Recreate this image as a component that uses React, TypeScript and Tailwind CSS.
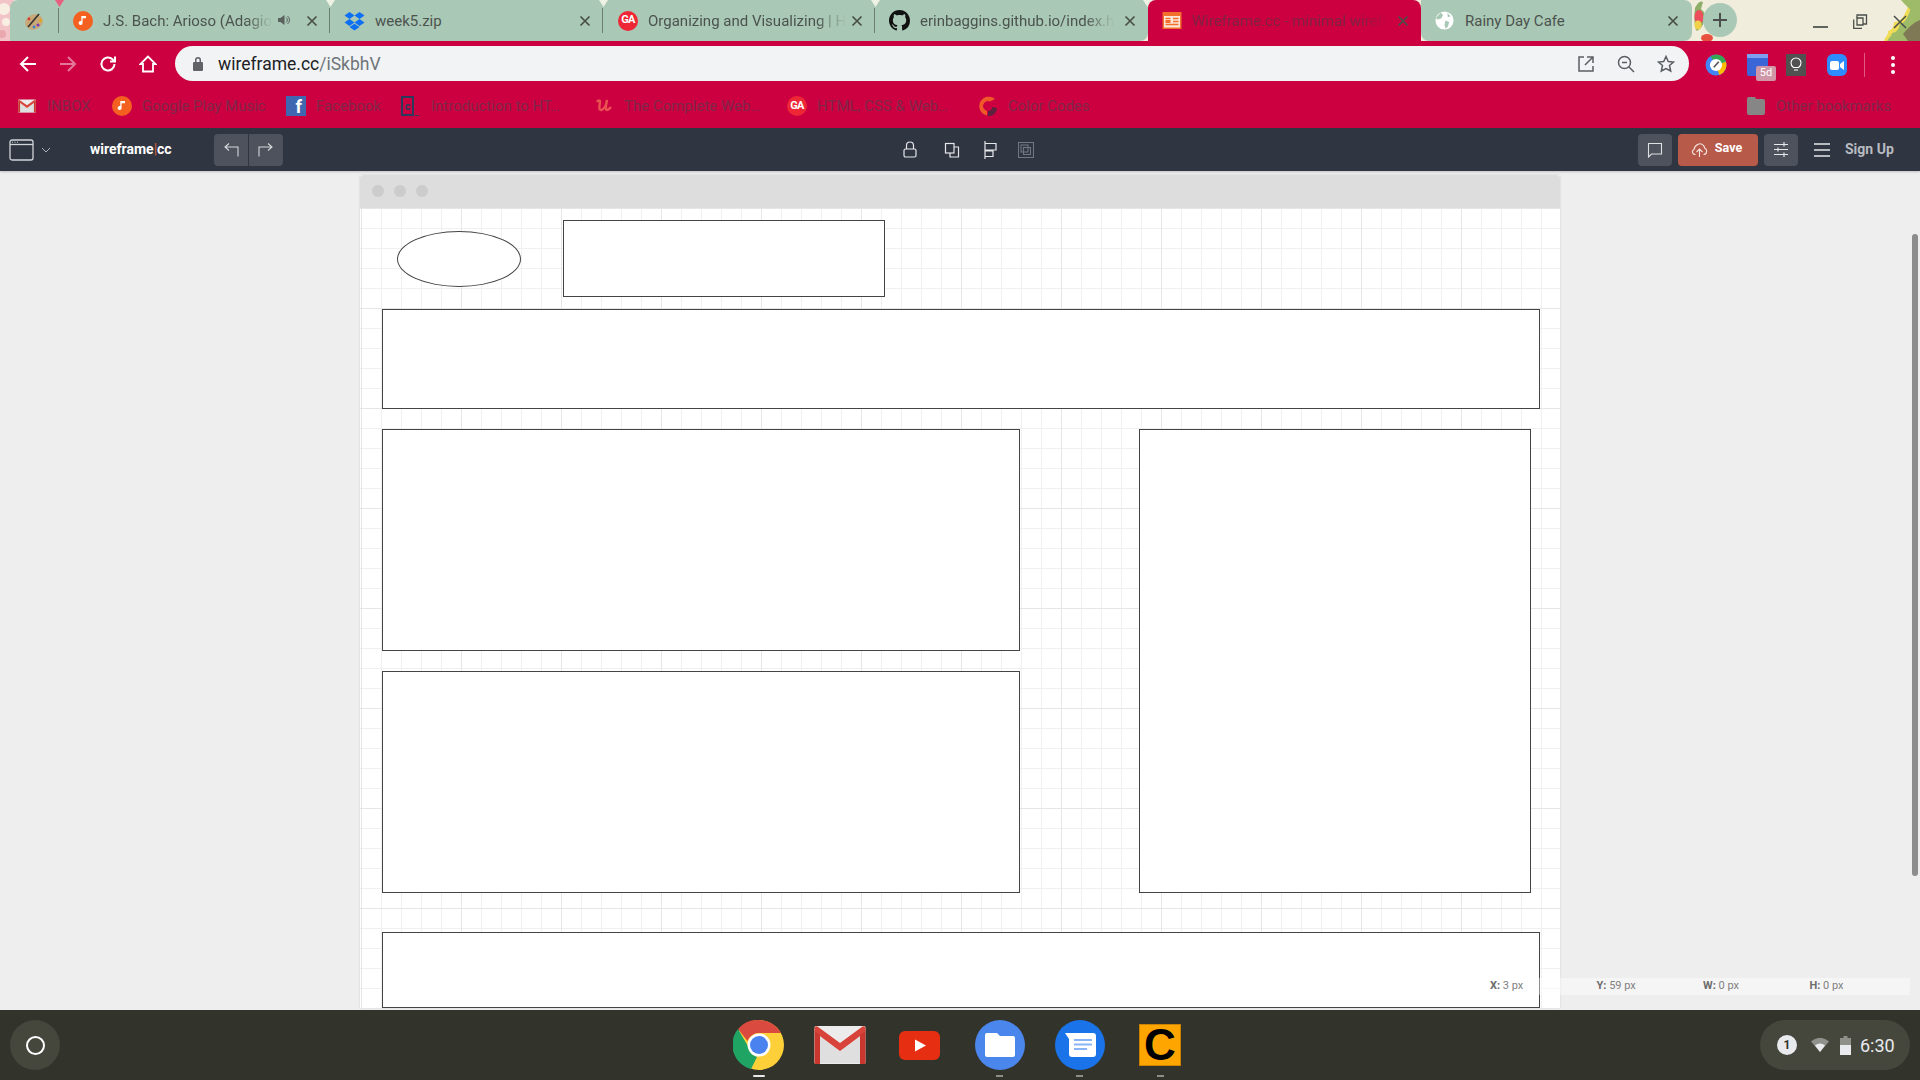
import React from "react";

const S = ({ w = 16, h = 16, vb = "0 0 16 16", c = "#fff", sw = 1.3, className = "", children }: any) => (
  <svg width={w} height={h} viewBox={vb} fill="none" stroke={c} strokeWidth={sw} className={`shrink-0 ${className}`}>
    {children}
  </svg>
);

const Close = () => (
  <svg width="12" height="12" viewBox="0 0 12 12" stroke="#4a5048" strokeWidth="1.7" className="shrink-0">
    <path d="M1.5 1.5l9 9M10.5 1.5l-9 9" />
  </svg>
);

const Music = ({ size = 20 }: { size?: number }) => (
  <svg width={size} height={size} viewBox="0 0 20 20" className="shrink-0">
    <circle cx="10" cy="10" r="10" fill="#f4601f" />
    <path d="M9.6 5v7a2 2 0 1 1-1.3-1.9V5z M9.6 5h3.4v2.2H9.6z" fill="#fff" />
  </svg>
);

const GA = () => (
  <span className="flex h-5 w-5 shrink-0 items-center justify-center rounded-full bg-[#ee2737] text-[11px] font-bold tracking-[-0.8px] text-white">GA</span>
);

const Tab = ({ w, icon, title, close = true, active = false, extra, textW, round }: any) => (
  <div className={`relative flex h-full items-center ${w} ${active ? "bg-[#cc0040]" : ""} ${round ?? ""}`}>
    {icon}
    {title && (
      <span className={`${textW} pt-[1px] whitespace-nowrap text-[15px] [mask-image:linear-gradient(90deg,#000_85%,transparent)] ${active ? "text-[#7d2340]" : "text-[#4c534f]"}`}>
        {title}
      </span>
    )}
    {extra}
    {close && <span className="absolute right-[12px] top-[15px]"><Close /></span>}
  </div>
);

const Chrome = () => (
  <svg width="52" height="52" viewBox="0 0 52 52">
    <circle cx="26" cy="26" r="25" fill="#fdd03a" />
    <path d="M26 1a25 25 0 0 1 22 13H26a12 12 0 0 0-11.5 8L5 10A25 25 0 0 1 26 1z" fill="#db4a3f" />
    <path d="M5 10l11 19a12 12 0 0 0 8 9l-6 12A25 25 0 0 1 5 10z" fill="#1fa463" />
    <circle cx="26" cy="26" r="11.5" fill="#fff" />
    <circle cx="26" cy="26" r="9" fill="#4a83f0" />
  </svg>
);

const Gmail = ({ w = 52, h = 40 }: { w?: number; h?: number }) => (
  <svg width={w} height={h} viewBox="0 0 52 40">
    <rect x="0.5" y="1" width="51" height="38" rx="1.5" fill="#ececec" />
    <path d="M0.5 38V4l25 19 25-19v34" fill="#dfdfdf" />
    <path d="M0.5 3a2 2 0 0 1 3-1.4L26 18 48.5 1.6A2 2 0 0 1 51.5 3v4L26 26 0.5 7z" fill="#d9443a" />
    <path d="M0.5 6L6 10v29H2a1.5 1.5 0 0 1-1.5-1.5zM51.5 6L46 10v29h4a1.5 1.5 0 0 0 1.5-1.5z" fill="#c9372f" />
  </svg>
);

const Bm = ({ icon, label, w }: any) => (
  <div className={`flex shrink-0 items-center ${w}`}>
    <div className="flex w-[20px] shrink-0 items-center justify-center">{icon}</div>
    <span className="ml-[10px] whitespace-nowrap text-[15px] text-[#81274a]">{label}</span>
  </div>
);

const Btn = ({ className, children }: any) => (
  <div className={`flex h-[32px] items-center justify-center rounded-[4px] ${className}`}>{children}</div>
);

const Shape = ({ className }: { className: string }) => (
  <div className={`absolute border border-[#444444] bg-white ${className}`} />
);

const Stat = ({ k, v }: { k: string; v: string }) => (
  <div className="w-[106.5px] shrink-0 whitespace-nowrap text-[11px] text-[#808080]">
    <b className="text-[#6c6c6c]">{k}</b> {v}
  </div>
);

export default function App() {
  return (
    <div className="relative flex h-[1080px] w-[1920px] flex-col overflow-hidden bg-white [font-family:Roboto,sans-serif]">
      {/* Tab strip */}
      <div className="relative flex h-[41px] shrink-0 bg-[#f0eddc]">
        <svg className="absolute left-0 top-0" width="14" height="41" viewBox="0 0 14 41">
          <rect width="14" height="41" fill="#f2c4c8" />
          <circle cx="4" cy="9" r="6" fill="#f8efe2" />
          <circle cx="6" cy="22" r="4" fill="#f8efe2" />
          <circle cx="2" cy="34" r="4" fill="#e9a8ae" />
        </svg>
        <div className="relative ml-[10px] flex h-full w-[1138px] rounded-br-[8px] rounded-tl-[8px] bg-[#a9c8b5]">
          <div className="flex h-full w-[49px] items-center pl-[14px]">
            <svg width="20" height="20" viewBox="0 0 20 20">
              <ellipse cx="10" cy="11" rx="9" ry="7.5" fill="#c9a877" transform="rotate(-20 10 11)" />
              <path d="M4 16L15 3" stroke="#333" strokeWidth="1.6" />
              <circle cx="14" cy="14" r="1.6" fill="#7d3fb0" />
              <circle cx="16.5" cy="9.5" r="1.4" fill="#e3a51a" />
              <circle cx="5" cy="8" r="1.4" fill="#d23a3a" />
              <circle cx="10" cy="16" r="1.4" fill="#3a7fd2" />
            </svg>
          </div>
          <Tab w="w-[271px] pl-[14px]" textW="ml-[10px]" title="J.S. Bach: Arioso (Adagio" icon={<Music />}
            extra={
              <svg width="14" height="14" viewBox="0 0 14 14" fill="#5b625e" className="absolute left-[218px] top-[13px]">
                <path d="M1 5h2.5L7.5 2v10L3.500 9H1z" />
                <path d="M9 4.500a3 3 0 0 1 0 5M10.500 3a5 5 0 0 1 0 8" stroke="#5b625e" fill="none" />
              </svg>
            } />
          <Tab w="w-[273px] pl-[14px]" textW="ml-[10px] [mask-image:none]" title="week5.zip" icon={
            <svg width="21" height="20" viewBox="0 0 21 20" fill="#0d6ff2" className="shrink-0">
              <path d="M5.500 1L0.500 4.500l5 3.500 5-3.500zM15.500 1l-5 3.500 5 3.500 5-3.500zM0.500 11.500l5 3.500 5-3.500-5-3.500zM20.500 11.500l-5-3.500-5 3.500 5 3.500zM5.500 16l5 3.500 5-3.500-5-3.300z" />
            </svg>
          } />
          <Tab w="w-[272px] pl-[15px]" textW="ml-[10px]" title="Organizing and Visualizing | H" icon={<GA />} />
          <Tab w="w-[273px] pl-[14px]" textW="ml-[10px]" title="erinbaggins.github.io/index.h" icon={
            <svg width="21" height="21" viewBox="0 0 16 16" fill="#111" className="shrink-0">
              <path d="M8 0C3.580 0 0 3.580 0 8c0 3.540 2.290 6.530 5.470 7.590.4.070.55-.170.550-.380 0-.190-.010-.820-.010-1.490-2.010.370-2.530-.490-2.690-.940-.090-.230-.480-.940-.820-1.130-.280-.150-.680-.520-.010-.530.630-.010 1.080.580 1.230.820.720 1.210 1.870.870 2.330.660.070-.520.280-.870.510-1.070-1.780-.200-3.640-.890-3.640-3.950 0-.870.310-1.590.820-2.150-.080-.200-.360-1.020.080-2.120 0 0 .670-.210 2.200.820.640-.180 1.320-.270 2-.270s1.360.090 2 .270c1.530-1.040 2.200-.820 2.200-.820.440 1.100.160 1.920.080 2.120.510.560.820 1.270.820 2.150 0 3.070-1.870 3.750-3.650 3.950.290.250.540.730.540 1.480 0 1.070-.010 1.930-.010 2.200 0 .210.150.460.550.380A8.010 8.010 0 0 0 16 8c0-4.420-3.580-8-8-8z" />
            </svg>
          } />
          {[48, 319, 592, 864].map((x) => (
            <div key={x} className="absolute top-[8px] h-[25px] w-[1px] bg-[#6e7d74]" style={{ left: x }} />
          ))}
          {[49, 320, 593, 865, 1137].map((x) => (
            <svg key={x} className="absolute top-0" style={{ left: x - 4 }} width="9" height="7" viewBox="0 0 9 7"><path d="M0 0h9L4.500 7z" fill={x === 49 ? "#e8607f" : "#eef2e4"} /></svg>
          ))}
        </div>
        <Tab w="w-[273px] pl-[14px]" active round="rounded-t-[8px]" textW="ml-[10px]" title="Wireframe.cc - minimal wirefr" icon={
          <svg width="20" height="20" viewBox="0 0 20 20" className="shrink-0">
            <rect x="0.500" y="1" width="19" height="17" fill="#f26f2c" />
            <rect x="2" y="5" width="16" height="11.500" fill="#fde7d8" />
            <path d="M3.500 7.500h5M11 7.500h5.500M11 10.500h5.500M3.500 13.500h13" stroke="#f26f2c" strokeWidth="1.500" />
            <rect x="3.500" y="9" width="5" height="3" fill="#f26f2c" />
          </svg>
        } />
        <div className="relative flex h-full w-[271px] items-center rounded-b-[8px] rounded-tr-[8px] bg-[#a9c8b5] pl-[14px]">
          <svg width="19" height="19" viewBox="0 0 20 20" className="shrink-0">
            <circle cx="10" cy="10" r="9.500" fill="#fff" />
            <path d="M6 1.500l2.500 3-2 3.500-4 1L1 7zM11 10l4 1.500-1.500 5-2.500 2-1-4zM13 2l3.500 3.500-3 1z" fill="#a9c8b5" />
          </svg>
          <span className="ml-[11px] whitespace-nowrap pt-[1px] text-[15px] text-[#4c534f]">Rainy Day Cafe</span>
          <span className="absolute right-[13px] top-[15px]"><Close /></span>
        </div>
        <div className="relative flex-1">
          <svg className="absolute left-0 top-0" width="228" height="41" viewBox="0 0 228 41">
            <path d="M3 8c2-4 5-8 8-6l-2 7 3 3c2 5 0 12-3 16l-4 3c-3-2-3-16-2-23z" fill="#8fae6a" />
            <ellipse cx="7" cy="17" rx="4.500" ry="7" fill="#ea4f5b" />
            <ellipse cx="6" cy="25" rx="3.500" ry="4.500" fill="#f0d24a" />
            <ellipse cx="15" cy="38" rx="6" ry="4" fill="#e8503f" />
            <path d="M218 0h10v41h-36c1-5 5-6 4-10 5-1 6-6 6-9 8 0 12-8 16-22z" fill="#f1dc55" />
            <path d="M221 0h7v41h-33c2-4 5-5 5-8 7-1 7-7 8-9 6-1 10-11 13-24z" fill="#9dbb68" />
            <path d="M228 20c-6 2-12 8-17 14l5 7h12z" fill="#7f7a55" />
            <path d="M209 0c3 3 6 7 10 10l4-10z" fill="#9dbb68" />
          </svg>
          <div className="absolute left-[11px] top-[3px] flex h-[34px] w-[34px] items-center justify-center rounded-full bg-[#a9c8b5]">
            <svg width="14" height="14" viewBox="0 0 14 14" stroke="#4a4f4b" strokeWidth="2"><path d="M7 0v14M0 7h14" /></svg>
          </div>
          <div className="absolute left-[121px] top-[26px] h-[2px] w-[15px] bg-[#60655e]" />
          <svg className="absolute left-[161px] top-[14px]" width="15" height="15" viewBox="0 0 15 15" fill="none" stroke="#4a4f4b" strokeWidth="1.300">
            <path d="M9 14.500H.7V5.500" />
            <path d="M4 4V1h9.500v9H10" />
            <path d="M4 4v7h6V4z" />
          </svg>
          <svg className="absolute left-[201px] top-[15px]" width="14" height="14" viewBox="0 0 14 14" stroke="#4a4f4b" strokeWidth="1.500"><path d="M1 1l12 12M13 1L1 13" /></svg>
        </div>
      </div>

      {/* Address row */}
      <div className="relative flex h-[46px] shrink-0 items-start bg-[#cc0040]">
        <div className="flex h-full w-[175px] items-start pt-[14px]">
          <S w={18} h={18} vb="0 0 18 18" sw={2} className="ml-[19px]"><path d="M17 9H2M9 2L2 9l7 7" /></S>
          <S w={18} h={18} vb="0 0 18 18" sw={2} c="#e5799b" className="ml-[22px]"><path d="M1 9h15M9 2l7 7-7 7" /></S>
          <S w={18} h={18} vb="0 0 18 18" sw={2} className="ml-[22px]"><path d="M15.500 9a6.500 6.500 0 1 1-2-4.700L16 6.500M16 1.500v5h-5" /></S>
          <S w={18} h={18} vb="0 0 18 18" sw={1.800} className="ml-[22px]"><path d="M9 1.500L1.500 9H4v7.500h10V9h2.500z" /></S>
        </div>
        <div className="mt-[5px] flex h-[35px] w-[1514px] items-center rounded-full bg-[#f1f3f4] pl-[17px]">
          <svg width="12" height="15" viewBox="0 0 12 15" fill="#5f6368"><path d="M3 6V4a3 3 0 0 1 6 0v2h-1.500V4a1.500 1.500 0 0 0-3 0v2z" /><rect x="1" y="6" width="10" height="9" rx="1" /></svg>
          <span className="ml-[14px] pt-[1px] text-[17.5px] text-[#202124]">wireframe.cc<span className="text-[#70757a]">/iSkbhV</span></span>
          <div className="ml-auto flex items-center gap-[22px] pr-[14px]">
            <S w={18} h={18} vb="0 0 18 18" c="#5a5f62" sw={1.500}><path d="M7 2H2v14h14v-5M10 2h6v6M16 2L8 10" /></S>
            <S w={18} h={18} vb="0 0 18 18" c="#5a5f62" sw={1.500}><circle cx="7.500" cy="7.500" r="6" /><path d="M5 7.500h5M12 12l5 5" /></S>
            <S w={18} h={18} vb="0 0 18 18" c="#5a5f62" sw={1.500}><path d="M9 1.500l2.300 5 5.200.5-4 3.500 1.200 5.500L9 13.500 4.300 16l1.200-5.500-4-3.500 5.200-.5z" /></S>
          </div>
        </div>
        <div className="relative flex-1">
          <svg className="absolute left-[16px] top-[13px]" width="22" height="22" viewBox="0 0 20 20">
            <circle cx="10" cy="10" r="9.500" fill="#4285f4" />
            <path d="M10 .5A9.500 9.500 0 0 1 19 7l-9 3-5-8z" fill="#34a853" />
            <path d="M19 7a9.500 9.500 0 0 1-6 12l-3-9z" fill="#fbbc04" />
            <circle cx="10" cy="10" r="5.500" fill="#fff" />
            <path d="M8 12l4.500-5" stroke="#555" strokeWidth="1.500" />
          </svg>
          <div className="absolute left-[58px] top-[13px] h-[22px] w-[21px] rounded-[2px] bg-[#3a66d8]" />
          <div className="absolute left-[58px] top-[13px] h-[4px] w-[21px] bg-[#7fa0ee]" />
          <div className="absolute left-[67px] top-[25px] flex h-[15px] w-[20px] items-center justify-center rounded-[2px] bg-[#cf97a7] text-[11px] text-white">5d</div>
          <div className="absolute left-[97px] top-[13px] flex h-[22px] w-[20px] items-center justify-center bg-[#515151]">
            <svg width="12" height="16" viewBox="0 0 12 16" fill="none" stroke="#fff" strokeWidth="1.100"><path d="M3.500 10.500C2 9.500 1 8 1 6a5 5 0 0 1 10 0c0 2-1 3.500-2.500 4.500zM4 13h4" /></svg>
          </div>
          <div className="absolute left-[138px] top-[13px] flex h-[22px] w-[20px] items-center justify-center rounded-[6px] bg-[#2d8cff]">
            <svg width="14" height="9" viewBox="0 0 14 9" fill="#fff"><rect width="9" height="9" rx="2" /><path d="M10 3l4-3v9l-4-3z" /></svg>
          </div>
          <div className="absolute left-[175px] top-[12px] h-[24px] w-[1px] bg-[#de5a80]" />
          <svg className="absolute left-[202px] top-[14px]" width="4" height="20" viewBox="0 0 4 20" fill="#fff"><circle cx="2" cy="3" r="2" /><circle cx="2" cy="10" r="2" /><circle cx="2" cy="17" r="2" /></svg>
        </div>
      </div>

      {/* Bookmarks */}
      <div className="relative flex h-[41px] shrink-0 items-center bg-[#cc0040] pb-[3px] pl-[17px]">
        <Bm w="w-[95px]" label="INBOX" icon={<Gmail w={18} h={14} />} />
        <Bm w="w-[174px]" label="Google Play Music" icon={<Music />} />
        <Bm w="w-[115px]" label="Facebook" icon={
          <div className="flex h-[20px] w-[20px] items-center justify-end bg-[#3f66b0] pr-[4px] pt-[2px] text-[18px] font-bold leading-[18px] text-white">f</div>
        } />
        <Bm w="w-[193px]" label="Introduction to HT…" icon={
          <div className="flex h-[20px] w-[20px] items-end">
            <div className="flex h-[20px] w-[13px] items-center justify-center border-2 border-[#2b3a5c] text-[11px] font-bold leading-none text-[#2b3a5c]">c</div>
            <div className="ml-[1px] h-[1px] w-[4px] bg-[#2b3a5c]" />
          </div>
        } />
        <Bm w="w-[193px]" label="The Complete Web…" icon={
          <S w={18} h={18} vb="0 0 18 18" c="#ea5252" sw={2.400}><path d="M2 5c1-2 3-2 3 0s-2 8 1 8 6-6 6-10c-1 4-2 10 0 10s3-2 4-3" /></S>
        } />
        <Bm w="w-[191px]" label="HTML, CSS & Web…" icon={<GA />} />
        <Bm w="w-[100px]" label="Color Codes" icon={
          <svg width="20" height="20" viewBox="0 0 20 20" className="shrink-0">
            <path d="M17 3A9.500 9.500 0 1 0 9 19.500V15a5 5 0 1 1 3-9.500z" fill="#f05a28" />
            <path d="M10 20a8 8 0 0 0 9-8l-5-1a4 4 0 0 1-4 4z" fill="#5b2340" />
          </svg>
        } />
        <div className="absolute left-[1747px] top-[12px] h-[16px] w-[18px] rounded-[2px] bg-[#868686]" />
        <div className="absolute left-[1747px] top-[10px] h-[5px] w-[9px] rounded-t-[2px] bg-[#868686]" />
        <span className="absolute left-[1776px] top-[8px] whitespace-nowrap text-[15px] text-[#81274a]">Other bookmarks</span>
      </div>

      {/* Wireframe toolbar */}
      <div className="relative z-10 flex h-[43px] shrink-0 items-center bg-[#2f3541] shadow-[0_1px_2px_rgba(0,0,0,0.2)]">
        <svg className="ml-[9px]" width="25" height="22" viewBox="0 0 25 22" fill="none" stroke="#d2d4d8" strokeWidth="1.300">
          <rect x="1" y="1" width="23" height="20" rx="2" />
          <path d="M1 5.500h23" />
          <path d="M3 3.200h1M5.500 3.200h1M8 3.200h1" strokeWidth="1" />
        </svg>
        <S w={10} h={10} vb="0 0 10 10" c="#aab0b8" sw={1} className="ml-[7px]"><path d="M1 3l4 4 4-4" /></S>
        <span className="ml-[39px] w-[124px] text-[14px] font-bold text-white">wireframe<span className="font-normal text-[#d8613c]">|</span>cc</span>
        <Btn className="w-[69px] bg-[#4d525c]">
          <div className="flex h-full flex-1 items-center justify-center border-r border-[#2f3541] pl-[2px]">
            <S w={16} h={16} vb="0 0 16 16" c="#d6d8db" sw={1.100}><path d="M5 1.500L1 5l4 3.500M1 5h13v9.500" /></S>
          </div>
          <div className="flex h-full flex-1 items-center justify-center pr-[2px]">
            <S w={16} h={16} vb="0 0 16 16" c="#d6d8db" sw={1.100}><path d="M11 1.500L15 5l-4 3.500M15 5H2v9.500" /></S>
          </div>
        </Btn>
        <div className="ml-[619px] flex items-center">
          <S w={16} h={17} vb="0 0 16 17" c="#e6e7e9" sw={1.200}><rect x="2" y="8" width="12" height="8" rx="1.500" /><path d="M4.500 8V4.500a3.500 3.500 0 0 1 7 0V8" /></S>
          <S w={16} h={16} vb="0 0 16 16" c="#e6e7e9" sw={1.200} className="ml-[26px]"><rect x="1.500" y="1.500" width="8.500" height="9.500" /><path d="M10 5h4.500v10H6v-4" /></S>
          <S w={14} h={18} vb="0 0 14 18" c="#e6e7e9" sw={1.200} className="ml-[24px]"><path d="M1 0v18M1 2.500h11V9H1M1 10h8v5.500H1" /></S>
          <S w={16} h={16} vb="0 0 16 16" c="#717680" sw={1.100} className="ml-[20px]"><rect x=".500" y=".500" width="15" height="15" /><rect x="3" y="3" width="7" height="7" /><rect x="5.500" y="5.500" width="7" height="7" /></S>
        </div>
        <Btn className="ml-[604px] w-[34px] bg-[#4d525c]">
          <S w={16} h={16} vb="0 0 16 16" c="#dfe0e3" sw={1.100}><path d="M1.500 1.500h13v10.500H4.500L1.500 15z" /></S>
        </Btn>
        <Btn className="ml-[6px] w-[80px] bg-[#b85a4a]">
          <S w={17} h={16} vb="0 0 17 16" c="#f3e2de" sw={1.100} className="-ml-[3px]"><path d="M4.500 12.500C1 12.500 .500 8.500 3 7.500 3.500 3.500 9-.500 12.500 3.500c1 1 1 2.500 1 2.500 3 1 3 6.500-1 6.500M8.500 15V7.500M5.500 10l3-3 3 3" /></S>
          <span className="mb-[2px] ml-[7px] text-[12.5px] font-bold text-white">Save</span>
        </Btn>
        <Btn className="ml-[6px] w-[34px] bg-[#4d525c]">
          <S w={14} h={15} vb="0 0 14 15" c="#e6e7e9" sw={1.200}><path d="M0 2.500h14M0 7.500h14M0 12.500h14M10 0v4.500M4 5.500v4M10 10.500v4.500" /></S>
        </Btn>
        <S w={16} h={14} vb="0 0 16 14" c="#e6e7e9" sw={1.400} className="ml-[16px]"><path d="M0 1h16M0 7h16M0 13h16" /></S>
        <span className="ml-[15px] whitespace-nowrap text-[14px] font-bold text-[#b8bbc0]">Sign Up</span>
      </div>

      {/* Workspace */}
      <div className="relative flex min-h-0 flex-1 justify-center overflow-hidden bg-[#eeeeee]">
        <div className="mt-[4px] flex h-[833px] w-[1200px] flex-col shadow-[0_0_2px_rgba(0,0,0,0.12)]">
          <div className="flex h-[33px] shrink-0 items-center gap-[10px] rounded-t-[4px] bg-[#dddddd] pb-[1px] pl-[12px]">
            <div className="h-[12px] w-[12px] rounded-full bg-[#cccccc]" />
            <div className="h-[12px] w-[12px] rounded-full bg-[#cccccc]" />
            <div className="h-[12px] w-[12px] rounded-full bg-[#cccccc]" />
          </div>
          <div className="relative flex-1 bg-white bg-[linear-gradient(#e6e6e6_1px,transparent_1px),linear-gradient(90deg,#e6e6e6_1px,transparent_1px),linear-gradient(#f0f0f0_1px,transparent_1px),linear-gradient(90deg,#f0f0f0_1px,transparent_1px)] [background-position:1px_0] [background-size:100px_100px,100px_100px,20px_20px,20px_20px]">
            <Shape className="left-[37px] top-[23px] h-[56px] w-[124px] rounded-[50%]" />
            <Shape className="left-[203px] top-[12px] h-[77px] w-[322px]" />
            <Shape className="left-[22px] top-[101px] h-[100px] w-[1158px]" />
            <Shape className="left-[22px] top-[221px] h-[222px] w-[638px]" />
            <Shape className="left-[22px] top-[463px] h-[222px] w-[638px]" />
            <Shape className="left-[779px] top-[221px] h-[464px] w-[392px]" />
            <Shape className="left-[22px] top-[724px] h-[76px] w-[1158px]" />
          </div>
        </div>
        <div className="absolute left-[1470px] top-[807px] flex h-[17px] w-[440px] items-center overflow-visible bg-white/40 pl-[20px]">
          <Stat k="X:" v="3 px" />
          <Stat k="Y:" v="59 px" />
          <Stat k="W:" v="0 px" />
          <div className="shrink-0 whitespace-nowrap text-[11px] text-[#808080]"><b className="text-[#6c6c6c]">H:</b> 0 px</div>
        </div>
        <div className="absolute left-[1912px] top-[63px] h-[642px] w-[6px] rounded-[3px] bg-[#8c8c8c]" />
      </div>

      {/* Shelf */}
      <div className="relative flex h-[70px] shrink-0 items-center bg-[#32332a] pl-[10px] pr-[10px]">
        <div className="flex h-[50px] w-[50px] items-center justify-center rounded-full bg-[#45473d]">
          <div className="h-[19px] w-[19px] rounded-full border-2 border-white" />
        </div>
        <div className="ml-[673px] flex items-center">
          <Chrome />
          <div className="ml-[29px]"><Gmail /></div>
          <svg className="ml-[33px]" width="41" height="29" viewBox="0 0 41 29">
            <rect width="41" height="29" rx="6" fill="#e62e12" />
            <path d="M16 8.500l11 6-11 6z" fill="#fff" />
          </svg>
          <div className="relative ml-[35px] flex h-[50px] w-[50px] items-center justify-center rounded-full bg-[#4a86ec]">
            <svg width="30" height="24" viewBox="0 0 30 24" fill="#fff"><path d="M2 0h10l3 3h13a2 2 0 0 1 2 2v17a2 2 0 0 1-2 2H2a2 2 0 0 1-2-2V2a2 2 0 0 1 2-2z" /></svg>
          </div>
          <div className="ml-[30px] flex h-[50px] w-[50px] items-center justify-center rounded-full bg-[#1a73e8]">
            <svg width="31" height="24" viewBox="0 0 31 24"><path d="M0 0h28a3 3 0 0 1 3 3v18a3 3 0 0 1-3 3H7a3 3 0 0 1-3-3V6z" fill="#fff" /><path d="M9 7h18M9 11.500h18M9 16h13" stroke="#8ab4f8" strokeWidth="2" /></svg>
          </div>
          <div className="ml-[34px] flex h-[42px] w-[42px] items-center justify-center border border-[#c98300] bg-[#ffa500] text-[44px] font-bold leading-none text-black [font-family:'Liberation_Sans',sans-serif]">C</div>
        </div>
        <div className="absolute left-[753px] top-[65px] h-[2px] w-[12px] rounded-[1px] bg-[#e8e8e8]" />
        <div className="absolute left-[996px] top-[65px] h-[2px] w-[7px] bg-[#8d8e88]" />
        <div className="absolute left-[1076px] top-[65px] h-[2px] w-[7px] bg-[#8d8e88]" />
        <div className="absolute left-[1157px] top-[65px] h-[2px] w-[7px] bg-[#8d8e88]" />
        <div className="ml-auto flex h-[50px] w-[150px] items-center rounded-full bg-[#45473d] pl-[17px]">
          <div className="flex h-[20px] w-[20px] items-center justify-center rounded-full bg-[#e8eaed] text-[12px] font-bold text-[#32332a]">1</div>
          <svg className="ml-[14px]" width="18" height="14" viewBox="0 0 18 14"><path d="M0 3.500a13 13 0 0 1 18 0L9 14z" fill="#e8eaed" opacity=".45" /><path d="M4 7.500a7.500 7.500 0 0 1 10 0L9 14z" fill="#e8eaed" /></svg>
          <svg className="ml-[11px]" width="11" height="19" viewBox="0 0 11 19"><path d="M3.500 0h4v2H11v7H0V2h3.500z" fill="#8f9089" /><rect y="9" width="11" height="10" fill="#e8eaed" /></svg>
          <span className="ml-[9px] text-[18px] text-[#e8eaed]">6:30</span>
        </div>
      </div>
    </div>
  );
}
